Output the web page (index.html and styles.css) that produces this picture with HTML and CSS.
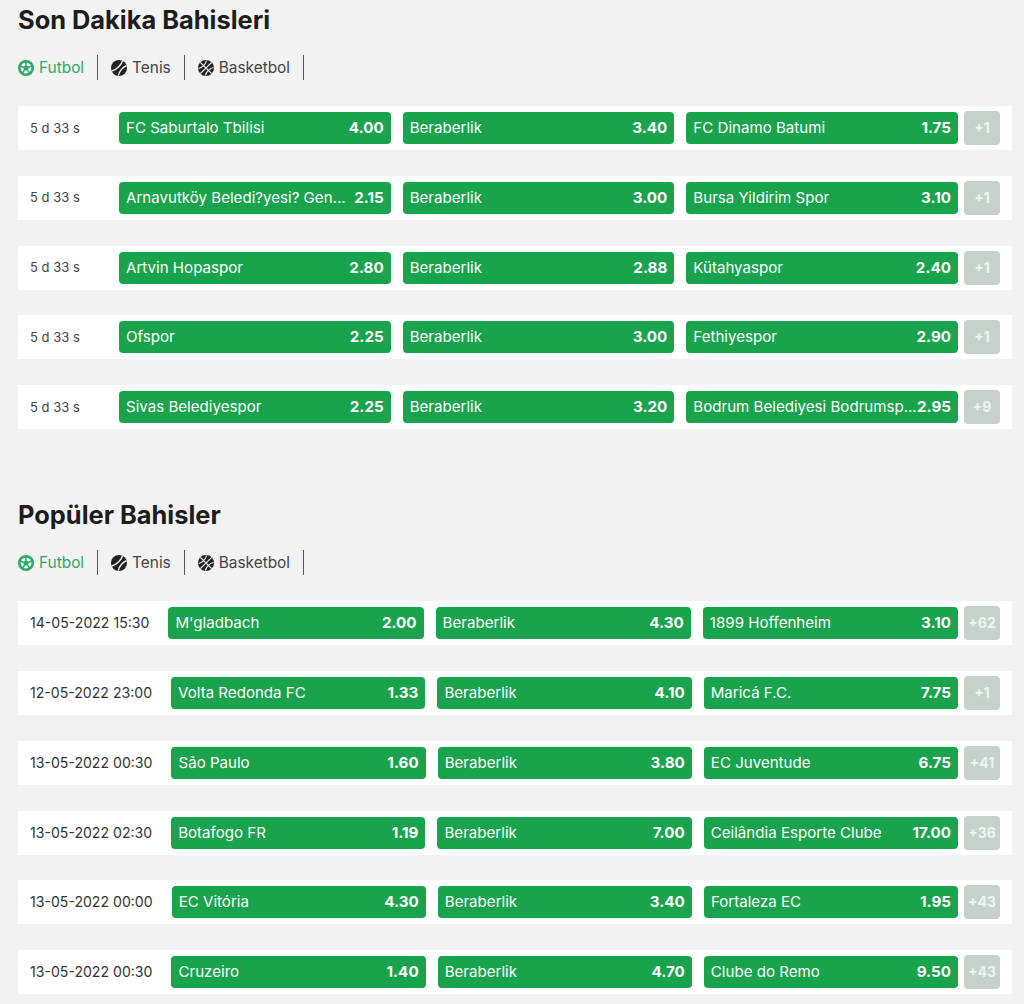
FILE: index.html
```html
<!DOCTYPE html>
<html lang="en">
<head>
    <meta charset="UTF-8">
    <meta name="viewport" content="width=device-width, initial-scale=1.0">
    <title>Bahisler</title>
    <link rel="stylesheet" href="styles.css">
</head>
<body>
    <svg class="icon-defs" width="0" height="0">
        <symbol id="ball-futbol" viewBox="0 0 16 16">
            <circle cx="8" cy="8" r="8" fill="#2fa866"/>
            <circle cx="8" cy="8" r="5.400" fill="#fff"/>
            <path d="M8 4.900l3 2.200-1.100 3.500h-3.800l-1.100-3.500z" fill="#2fa866"/>
            <path d="M8 5.500V1.500M10.500 7.300l3.900-1.300M9.500 10.100l2.400 3.300M6.500 10.100l-2.400 3.300M5.500 7.300l-3.900-1.300" stroke="#2fa866" stroke-width="1.600"/>
        </symbol>
        <symbol id="ball-tenis" viewBox="0 0 16 16">
            <circle cx="8" cy="8" r="8" fill="#222"/>
            <path d="M11.500 0.600C10.700 4.500 6 9.500 0.700 11M15.400 5.600C12.500 7 8.500 11 7.300 15.600" fill="none" stroke="#f2f2f2" stroke-width="1.400"/>
        </symbol>
        <symbol id="ball-basketbol" viewBox="0 0 16 16">
            <circle cx="8" cy="8" r="8" fill="#222"/>
            <path d="M2.300 2.300L13.700 13.700M13.700 2.300L2.300 13.700M8.500 0.500C8 4 4 8 0.500 8.500M15.500 7.500C12 8 8 12 7.500 15.500" fill="none" stroke="#f2f2f2" stroke-width="1.200"/>
        </symbol>
    </svg>

    <div class="container">
        <!-- Son dakika -->
        <section class="bet-section">
            <h2>Son Dakika Bahisleri</h2>
            <div class="tabs">
                <a class="tab active"><svg class="tab-icon"><use href="#ball-futbol"/></svg>Futbol</a>
                <a class="tab"><svg class="tab-icon"><use href="#ball-tenis"/></svg>Tenis</a>
                <a class="tab"><svg class="tab-icon"><use href="#ball-basketbol"/></svg>Basketbol</a>
            </div>

            <div class="match">
                <div class="time">5 d 33 s</div>
                <div class="odd"><span class="name">FC Saburtalo Tbilisi</span><b>4.00</b></div>
                <div class="odd"><span class="name">Beraberlik</span><b>3.40</b></div>
                <div class="odd"><span class="name">FC Dinamo Batumi</span><b>1.75</b></div>
                <div class="more">+1</div>
            </div>
            <div class="match">
                <div class="time">5 d 33 s</div>
                <div class="odd"><span class="name">Arnavutköy Beledi?yesi? Gen...</span><b>2.15</b></div>
                <div class="odd"><span class="name">Beraberlik</span><b>3.00</b></div>
                <div class="odd"><span class="name">Bursa Yildirim Spor</span><b>3.10</b></div>
                <div class="more">+1</div>
            </div>
            <div class="match">
                <div class="time">5 d 33 s</div>
                <div class="odd"><span class="name">Artvin Hopaspor</span><b>2.80</b></div>
                <div class="odd"><span class="name">Beraberlik</span><b>2.88</b></div>
                <div class="odd"><span class="name">Kütahyaspor</span><b>2.40</b></div>
                <div class="more">+1</div>
            </div>
            <div class="match">
                <div class="time">5 d 33 s</div>
                <div class="odd"><span class="name">Ofspor</span><b>2.25</b></div>
                <div class="odd"><span class="name">Beraberlik</span><b>3.00</b></div>
                <div class="odd"><span class="name">Fethiyespor</span><b>2.90</b></div>
                <div class="more">+1</div>
            </div>
            <div class="match">
                <div class="time">5 d 33 s</div>
                <div class="odd"><span class="name">Sivas Belediyespor</span><b>2.25</b></div>
                <div class="odd"><span class="name">Beraberlik</span><b>3.20</b></div>
                <div class="odd"><span class="name">Bodrum Belediyesi Bodrumsp...</span><b>2.95</b></div>
                <div class="more">+9</div>
            </div>
        </section>

        <!-- Populer -->
        <section class="bet-section">
            <h2>Popüler Bahisler</h2>
            <div class="tabs">
                <a class="tab active"><svg class="tab-icon"><use href="#ball-futbol"/></svg>Futbol</a>
                <a class="tab"><svg class="tab-icon"><use href="#ball-tenis"/></svg>Tenis</a>
                <a class="tab"><svg class="tab-icon"><use href="#ball-basketbol"/></svg>Basketbol</a>
            </div>

            <div class="match">
                <div class="time date">14-05-2022 15:30</div>
                <div class="odd"><span class="name">M'gladbach</span><b>2.00</b></div>
                <div class="odd"><span class="name">Beraberlik</span><b>4.30</b></div>
                <div class="odd"><span class="name">1899 Hoffenheim</span><b>3.10</b></div>
                <div class="more">+62</div>
            </div>
            <div class="match">
                <div class="time date">12-05-2022 23:00</div>
                <div class="odd"><span class="name">Volta Redonda FC</span><b>1.33</b></div>
                <div class="odd"><span class="name">Beraberlik</span><b>4.10</b></div>
                <div class="odd"><span class="name">Maricá F.C.</span><b>7.75</b></div>
                <div class="more">+1</div>
            </div>
            <div class="match">
                <div class="time date">13-05-2022 00:30</div>
                <div class="odd"><span class="name">São Paulo</span><b>1.60</b></div>
                <div class="odd"><span class="name">Beraberlik</span><b>3.80</b></div>
                <div class="odd"><span class="name">EC Juventude</span><b>6.75</b></div>
                <div class="more">+41</div>
            </div>
            <div class="match">
                <div class="time date">13-05-2022 02:30</div>
                <div class="odd"><span class="name">Botafogo FR</span><b>1.19</b></div>
                <div class="odd"><span class="name">Beraberlik</span><b>7.00</b></div>
                <div class="odd"><span class="name">Ceilândia Esporte Clube</span><b>17.00</b></div>
                <div class="more">+36</div>
            </div>
            <div class="match">
                <div class="time date">13-05-2022 00:00</div>
                <div class="odd"><span class="name">EC Vitória</span><b>4.30</b></div>
                <div class="odd"><span class="name">Beraberlik</span><b>3.40</b></div>
                <div class="odd"><span class="name">Fortaleza EC</span><b>1.95</b></div>
                <div class="more">+43</div>
            </div>
            <div class="match">
                <div class="time date">13-05-2022 00:30</div>
                <div class="odd"><span class="name">Cruzeiro</span><b>1.40</b></div>
                <div class="odd"><span class="name">Beraberlik</span><b>4.70</b></div>
                <div class="odd"><span class="name">Clube do Remo</span><b>9.50</b></div>
                <div class="more">+43</div>
            </div>
        </section>
    </div>
</body>
</html>
```

FILE: styles.css
```css
body {
    font-family: Inter, "Liberation Sans", sans-serif;
    margin: 0;
    padding: 0;
    background-color: #f2f2f2;
    color: #222;
}
.icon-defs {
    display: block;
}
.container {
    padding: 0 12px 0 18px;
}
.bet-section + .bet-section {
    margin-top: 66px;
}
h2 {
    font-size: 25.4px;
    line-height: 40px;
    font-weight: 700;
    margin: 0 0 15px;
    color: #1d1d1d;
}
.tabs {
    display: flex;
    margin-bottom: 26px;
}
.tab {
    display: flex;
    align-items: center;
    height: 25px;
    padding: 0 13px;
    border-right: 1px solid #555;
    font-size: 15.4px;
    color: #444;
}
.tab:first-child {
    padding-left: 0;
}
.tab.active {
    color: #2fa866;
}
.tab-icon {
    width: 16px;
    height: 16px;
    margin-right: 5px;
}
.match {
    display: flex;
    align-items: center;
    height: 44px;
    margin-bottom: 25.8px;
    padding-right: 12px;
    background-color: #fff;
}
.match:last-child {
    margin-bottom: 0;
}
.time {
    box-sizing: border-box;
    min-width: 101px;
    padding: 0 19px 1px 12px;
    font-size: 13px;
    white-space: nowrap;
    color: #444;
}
.time.date {
    font-size: 14.1px;
    color: #333;
}
.odd {
    flex: 1 1 0;
    min-width: 0;
    display: flex;
    align-items: center;
    justify-content: space-between;
    box-sizing: border-box;
    height: 32px;
    margin-right: 12px;
    padding: 0 7px 1px;
    background-color: #19a34c;
    border-radius: 4px;
    color: #fff;
    font-size: 15.1px;
}
.odd:nth-child(4) {
    margin-right: 6px;
}
.odd .name {
    white-space: nowrap;
}
.odd b {
    font-size: 15.2px;
    font-weight: 700;
}
.more {
    width: 36px;
    height: 34px;
    line-height: 33px;
    flex: none;
    text-align: center;
    background-color: #c4d2cb;
    border-radius: 4px;
    color: #eef2f0;
    font-size: 14px;
    font-weight: 700;
}
```
